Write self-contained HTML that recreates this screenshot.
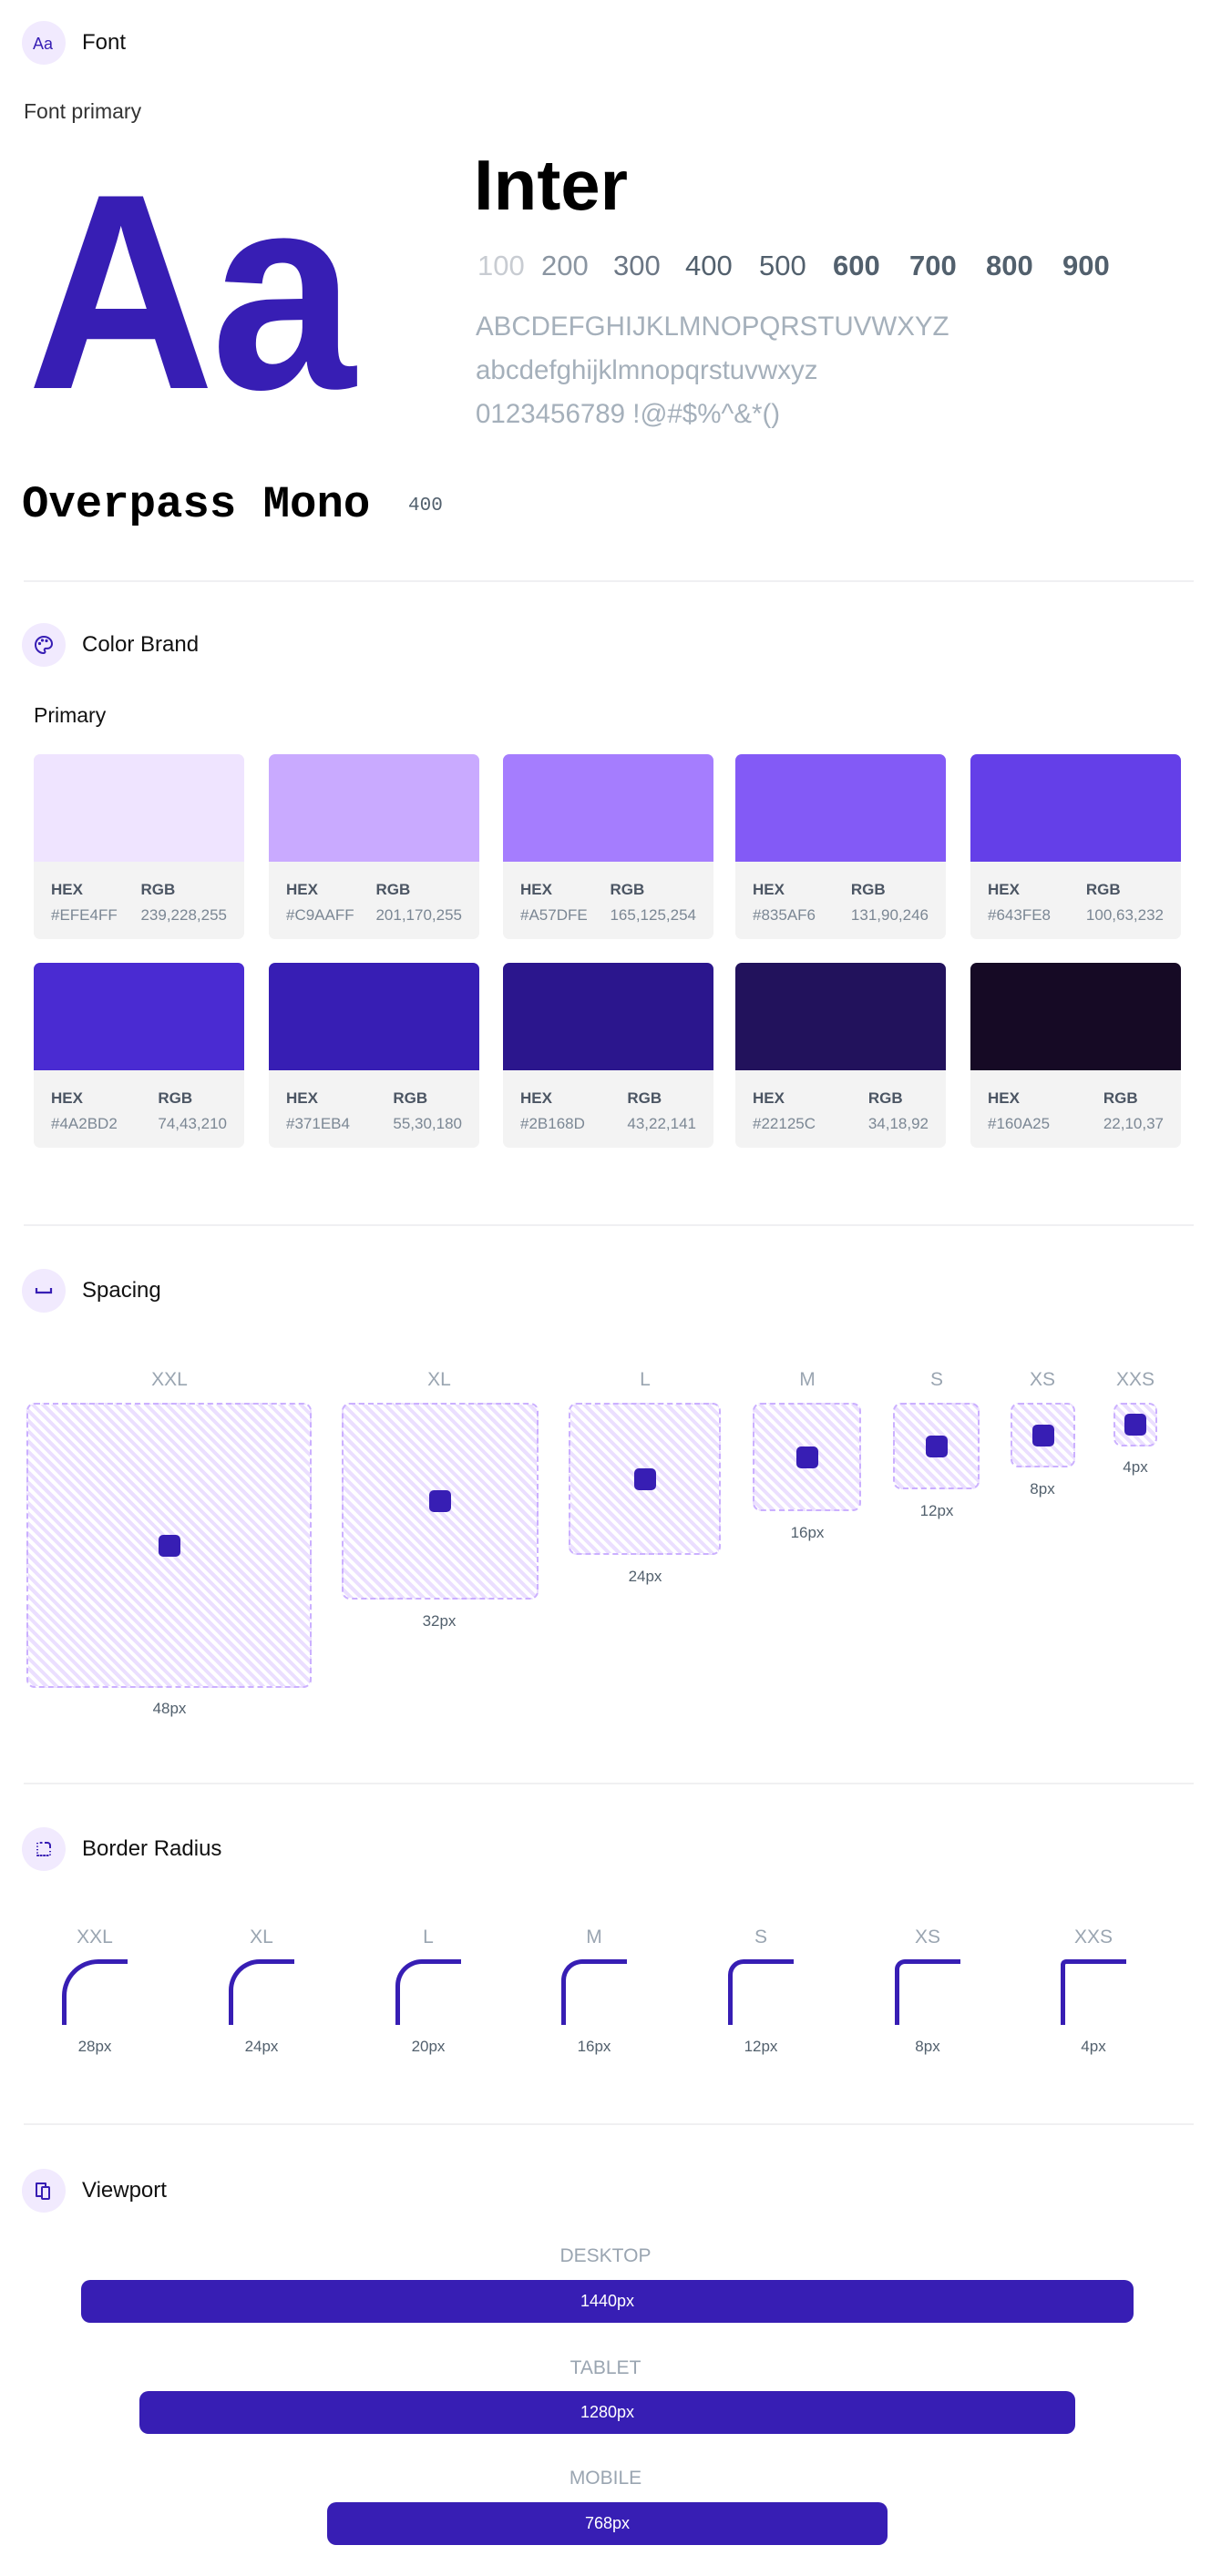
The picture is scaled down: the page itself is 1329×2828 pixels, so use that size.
<!DOCTYPE html>
<html><head><meta charset="utf-8"><style>
*{margin:0;padding:0;box-sizing:border-box}
body{width:1329px;height:2828px;background:#fff;font-family:"Liberation Sans",sans-serif;position:relative;overflow:hidden}
.a{position:absolute}
.ic{position:absolute;left:24px;width:48px;height:48px;border-radius:50%;background:#f1eafe;display:flex;align-items:center;justify-content:center}
.ht{position:absolute;left:90px;font-size:24px;color:#111;line-height:30px}
.hr{position:absolute;left:26px;width:1284px;height:2px;background:#f0f0f2}
.w{position:absolute;top:274px;font-size:31px;color:#52606d;line-height:36px}
.card{position:absolute;width:231px;height:203px;border-radius:7px;background:#f3f3f3;overflow:hidden}
.card .c{height:118px}
.card .i{display:flex;justify-content:space-between;padding:20px 19px 0}
.card b{display:block;font-size:17px;color:#4b5563;line-height:22px}
.card span{display:block;font-size:17px;color:#7b8794;line-height:22px;margin-top:6px}
.lbl{position:absolute;font-size:21px;color:#9aa5b1;text-align:center;width:120px;line-height:26px}
.val{position:absolute;font-size:17px;color:#52606d;text-align:center;width:120px;line-height:22px}
.box{position:absolute;top:1540px;border:2px dashed #cbb0ff;border-radius:9px;background:repeating-linear-gradient(45deg,#fff 0,#fff 4px,#ebdfff 4px,#ebdfff 8px)}
.box i{position:absolute;left:50%;top:50%;width:24px;height:24px;margin:-12px 0 0 -12px;background:#371eb4;border-radius:5px}
.cor{position:absolute;top:2151px;width:72px;height:72px;border-top:5px solid #371eb4;border-left:5px solid #371eb4}
.bar{position:absolute;height:47px;background:#371eb4;border-radius:10px;color:#fff;font-size:18px;display:flex;align-items:center;justify-content:center}
.vl{position:absolute;left:0;width:1329px;text-align:center;font-size:21px;color:#9aa5b1;line-height:26px}
</style></head><body>

<div class="ic" style="top:23px"><svg width="26" height="22" viewBox="0 0 26 22"><text x="1" y="18" font-family="Liberation Sans" font-size="18" fill="#371eb4">Aa</text></svg></div>
<div class="ht" style="top:32px">Font</div>
<div class="a" style="left:26px;top:108px;font-size:23px;color:#333;line-height:28px">Font primary</div>
<div class="a" style="left:30px;top:140px;font-size:306px;line-height:360px;color:#371eb4;font-weight:bold;letter-spacing:-4px;transform:scaleX(0.93);transform-origin:0 0">Aa</div>
<div class="a" style="left:520px;top:160px;font-size:78px;font-weight:bold;line-height:86px;color:#000">Inter</div>
<div class="w" style="left:524px;color:#c8ccd2">100</div>
<div class="w" style="left:594px;color:#8a95a1">200</div>
<div class="w" style="left:673px;color:#6b7684">300</div>
<div class="w" style="left:752px">400</div>
<div class="w" style="left:833px">500</div>
<div class="w" style="left:914px;font-weight:bold">600</div>
<div class="w" style="left:998px;font-weight:bold">700</div>
<div class="w" style="left:1082px;font-weight:bold">800</div>
<div class="w" style="left:1166px;font-weight:bold">900</div>
<div class="a" style="left:522px;top:335px;font-size:29.5px;line-height:48px;color:#a5b0bb">ABCDEFGHIJKLMNOPQRSTUVWXYZ<br>abcdefghijklmnopqrstuvwxyz<br>0123456789 !@#$%^&amp;*()</div>
<div class="a" style="left:24px;top:524px;font-family:'Liberation Mono',monospace;font-size:49px;line-height:60px;color:#000;font-weight:bold">Overpass Mono</div>
<div class="a" style="left:448px;top:543px;font-family:'Liberation Mono',monospace;font-size:21px;line-height:26px;color:#52606d">400</div>
<div class="hr" style="top:637px"></div>

<div class="ic" style="top:684px"><svg width="24" height="24" viewBox="0 0 24 24" fill="none" stroke="#371eb4" stroke-width="2" stroke-linecap="round" stroke-linejoin="round"><path d="M12 3a9 9 0 1 0 0 18c1 0 1.5-.8 1.5-1.5 0-.4-.2-.8-.4-1.1-.3-.3-.4-.6-.4-1a1.5 1.5 0 0 1 1.5-1.5H16a5 5 0 0 0 5-5C21 6.5 17 3 12 3z"/><circle cx="7.5" cy="10.5" r=".6" fill="#371eb4"/><circle cx="10.5" cy="7" r=".6" fill="#371eb4"/><circle cx="15" cy="7.5" r=".6" fill="#371eb4"/></svg></div>
<div class="ht" style="top:693px">Color Brand</div>
<div class="a" style="left:37px;top:771px;font-size:23px;color:#111;line-height:28px">Primary</div>

<div class="card" style="left:37px;top:828px"><div class="c" style="background:#EFE4FF"></div><div class="i"><div><b>HEX</b><span>#EFE4FF</span></div><div><b>RGB</b><span>239,228,255</span></div></div></div>
<div class="card" style="left:295px;top:828px"><div class="c" style="background:#C9AAFF"></div><div class="i"><div><b>HEX</b><span>#C9AAFF</span></div><div><b>RGB</b><span>201,170,255</span></div></div></div>
<div class="card" style="left:552px;top:828px"><div class="c" style="background:#A57DFE"></div><div class="i"><div><b>HEX</b><span>#A57DFE</span></div><div><b>RGB</b><span>165,125,254</span></div></div></div>
<div class="card" style="left:807px;top:828px"><div class="c" style="background:#835AF6"></div><div class="i"><div><b>HEX</b><span>#835AF6</span></div><div><b>RGB</b><span>131,90,246</span></div></div></div>
<div class="card" style="left:1065px;top:828px"><div class="c" style="background:#643FE8"></div><div class="i"><div><b>HEX</b><span>#643FE8</span></div><div><b>RGB</b><span>100,63,232</span></div></div></div>

<div class="card" style="left:37px;top:1057px"><div class="c" style="background:#4A2BD2"></div><div class="i"><div><b>HEX</b><span>#4A2BD2</span></div><div><b>RGB</b><span>74,43,210</span></div></div></div>
<div class="card" style="left:295px;top:1057px"><div class="c" style="background:#371EB4"></div><div class="i"><div><b>HEX</b><span>#371EB4</span></div><div><b>RGB</b><span>55,30,180</span></div></div></div>
<div class="card" style="left:552px;top:1057px"><div class="c" style="background:#2B168D"></div><div class="i"><div><b>HEX</b><span>#2B168D</span></div><div><b>RGB</b><span>43,22,141</span></div></div></div>
<div class="card" style="left:807px;top:1057px"><div class="c" style="background:#22125C"></div><div class="i"><div><b>HEX</b><span>#22125C</span></div><div><b>RGB</b><span>34,18,92</span></div></div></div>
<div class="card" style="left:1065px;top:1057px"><div class="c" style="background:#160A25"></div><div class="i"><div><b>HEX</b><span>#160A25</span></div><div><b>RGB</b><span>22,10,37</span></div></div></div>
<div class="hr" style="top:1344px"></div>

<div class="ic" style="top:1393px"><svg width="24" height="24" viewBox="0 0 24 24" fill="none" stroke="#371eb4" stroke-width="2.2"><path d="M4 9v5h16V9"/></svg></div>
<div class="ht" style="top:1402px">Spacing</div>

<div class="lbl" style="left:126px;top:1502px">XXL</div>
<div class="lbl" style="left:422px;top:1502px">XL</div>
<div class="lbl" style="left:648px;top:1502px">L</div>
<div class="lbl" style="left:826px;top:1502px">M</div>
<div class="lbl" style="left:968px;top:1502px">S</div>
<div class="lbl" style="left:1084px;top:1502px">XS</div>
<div class="lbl" style="left:1186px;top:1502px">XXS</div>

<div class="box" style="left:29px;width:313px;height:313px"><i></i></div>
<div class="box" style="left:375px;width:216px;height:216px"><i></i></div>
<div class="box" style="left:624px;width:167px;height:167px"><i></i></div>
<div class="box" style="left:826px;width:119px;height:119px"><i></i></div>
<div class="box" style="left:980px;width:95px;height:95px"><i></i></div>
<div class="box" style="left:1109px;width:71px;height:71px"><i></i></div>
<div class="box" style="left:1222px;width:48px;height:48px"><i></i></div>

<div class="val" style="left:126px;top:1865px">48px</div>
<div class="val" style="left:422px;top:1769px">32px</div>
<div class="val" style="left:648px;top:1720px">24px</div>
<div class="val" style="left:826px;top:1672px">16px</div>
<div class="val" style="left:968px;top:1648px">12px</div>
<div class="val" style="left:1084px;top:1624px">8px</div>
<div class="val" style="left:1186px;top:1600px">4px</div>
<div class="hr" style="top:1957px"></div>

<div class="ic" style="top:2006px"><svg width="24" height="24" viewBox="0 0 24 24" fill="none" stroke="#371eb4" stroke-width="2"><path d="M5 19h14M8.5 5h3" stroke-dasharray="1.2 2.3" stroke-linecap="round"/><path d="M13 5h3a3 3 0 0 1 3 3v3"/><path d="M19 14v5" stroke-dasharray="1.2 2.3"/><path d="M5 5v14" stroke-dasharray="1.2 2.3"/></svg></div>
<div class="ht" style="top:2015px">Border Radius</div>

<div class="lbl" style="left:44px;top:2114px">XXL</div>
<div class="lbl" style="left:227px;top:2114px">XL</div>
<div class="lbl" style="left:410px;top:2114px">L</div>
<div class="lbl" style="left:592px;top:2114px">M</div>
<div class="lbl" style="left:775px;top:2114px">S</div>
<div class="lbl" style="left:958px;top:2114px">XS</div>
<div class="lbl" style="left:1140px;top:2114px">XXS</div>

<div class="cor" style="left:68px;border-top-left-radius:40px"></div>
<div class="cor" style="left:251px;border-top-left-radius:34px"></div>
<div class="cor" style="left:434px;border-top-left-radius:29px"></div>
<div class="cor" style="left:616px;border-top-left-radius:23px"></div>
<div class="cor" style="left:799px;border-top-left-radius:17px"></div>
<div class="cor" style="left:982px;border-top-left-radius:11px"></div>
<div class="cor" style="left:1164px;border-top-left-radius:6px"></div>

<div class="val" style="left:44px;top:2236px">28px</div>
<div class="val" style="left:227px;top:2236px">24px</div>
<div class="val" style="left:410px;top:2236px">20px</div>
<div class="val" style="left:592px;top:2236px">16px</div>
<div class="val" style="left:775px;top:2236px">12px</div>
<div class="val" style="left:958px;top:2236px">8px</div>
<div class="val" style="left:1140px;top:2236px">4px</div>
<div class="hr" style="top:2331px"></div>

<div class="ic" style="top:2381px"><svg width="24" height="24" viewBox="0 0 24 24" fill="none" stroke="#371eb4" stroke-width="2" stroke-linejoin="round"><path d="M14 8V4H4v14h5"/><rect x="10" y="8" width="8" height="13" rx="1"/></svg></div>
<div class="ht" style="top:2390px">Viewport</div>

<div class="vl" style="top:2464px">DESKTOP</div>
<div class="bar" style="left:89px;top:2503px;width:1155px">1440px</div>
<div class="vl" style="top:2587px">TABLET</div>
<div class="bar" style="left:153px;top:2625px;width:1027px">1280px</div>
<div class="vl" style="top:2708px">MOBILE</div>
<div class="bar" style="left:359px;top:2747px;width:615px">768px</div>
</body></html>
